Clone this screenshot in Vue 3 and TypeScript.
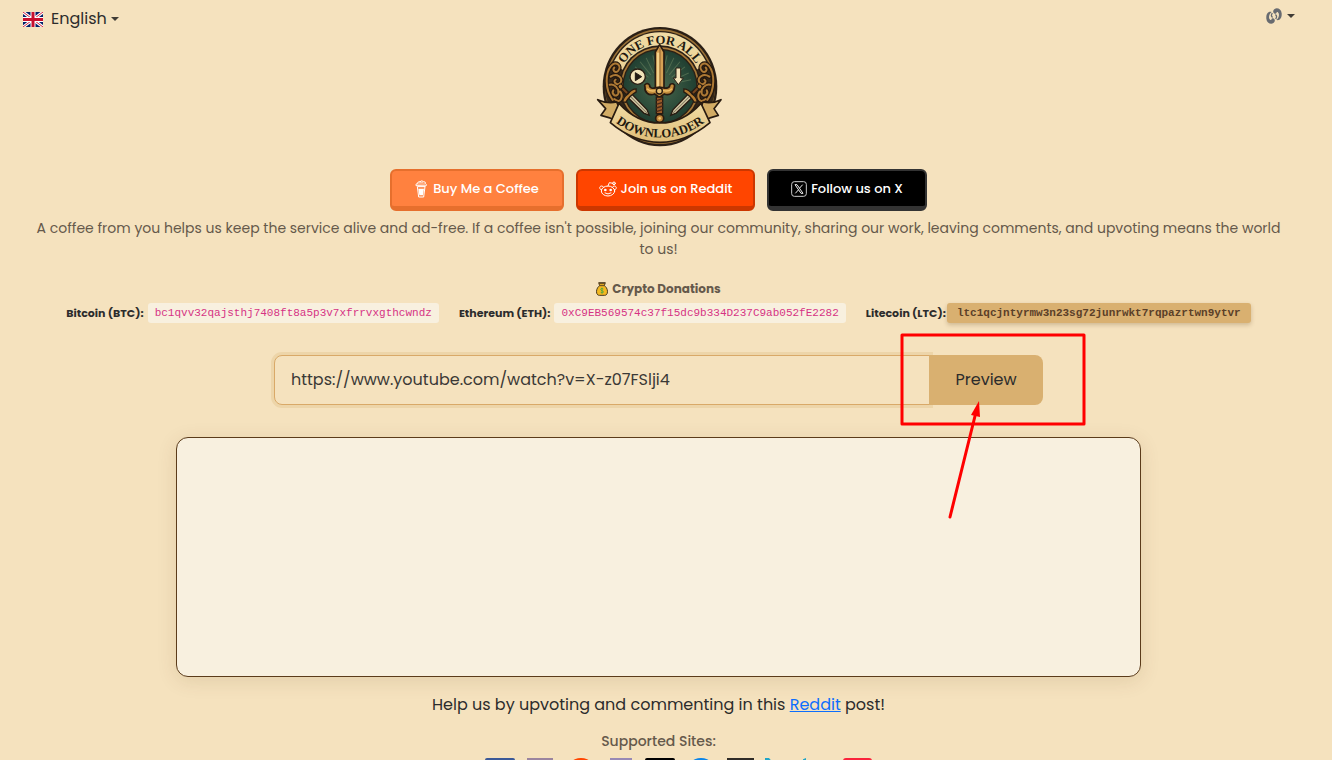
<script setup lang="ts">
import { ref } from 'vue'

interface Wallet {
  id: string
  label: string
  address: string
  active: boolean
}

const wallets: Wallet[] = [
  { id: 'btc', label: 'Bitcoin (BTC):', address: 'bc1qvv32qajsthj7408ft8a5p3v7xfrrvxgthcwndz', active: false },
  { id: 'eth', label: 'Ethereum (ETH):', address: '0xC9EB569574c37f15dc9b334D237C9ab052fE2282', active: false },
  { id: 'ltc', label: 'Litecoin (LTC):', address: 'ltc1qcjntyrmw3n23sg72junrwkt7rqpazrtwn9ytvr', active: true },
]

const url = ref('https://www.youtube.com/watch?v=X-z07FSlji4')
const rays: number[] = [-78, -65, -52, -39, -26, -13, 13, 26, 39, 52, 65, 78]
</script>

<template>
  <div class="page">
    <header class="header">
      <button class="menu" type="button">
        <svg class="flag" viewBox="0 0 40 30" aria-hidden="true">
          <rect width="40" height="30" fill="#012169" />
          <path d="M0 0 40 30M40 0 0 30" stroke="#fff" stroke-width="6" />
          <path d="M0 0 40 30M40 0 0 30" stroke="#d4213d" stroke-width="2" />
          <path d="M20 0V30M0 15H40" stroke="#fff" stroke-width="10" />
          <path d="M20 0V30M0 15H40" stroke="#c8102e" stroke-width="6" />
        </svg>
        <span>English</span>
        <span class="caret"></span>
      </button>

      <svg class="logo" viewBox="-4 0 420 405" role="img" aria-label="One For All Downloader">
        <defs>
          <path id="arc-top" d="M82 199A127 127 0 0 1 336 199" />
          <path id="arc-bottom" d="M44 278A220 220 0 0 0 374 278" />
          <linearGradient id="parchment" x1="0" y1="0" x2="0" y2="1">
            <stop offset="0" stop-color="#f1dca5" />
            <stop offset="1" stop-color="#dfbd78" />
          </linearGradient>
          <radialGradient id="green">
            <stop offset="0" stop-color="#47664c" />
            <stop offset="1" stop-color="#203f31" />
          </radialGradient>
          <g id="small-sword">
            <path d="M-8 -30H8L7 40 0 56-7 40Z" fill="#d8cba6" stroke="#281c12" stroke-width="4" />
            <path d="M0 -28V48" stroke="#827c61" stroke-width="3" />
            <path d="M-28 -28Q-16 -38 0 -34 16 -38 28 -28L22 -21Q0 -27 -22 -21Z" fill="#b77d32" stroke="#281c12" stroke-width="4" />
            <path d="M-5 -36V-62H5V-36Z" fill="#79471e" stroke="#281c12" stroke-width="4" />
            <circle cy="-66" r="7" fill="#b77d32" stroke="#281c12" stroke-width="3" />
          </g>
          <g id="scroll" fill="none" stroke-linecap="round">
            <path d="M67 240C42 206 46 158 62 138 77 119 95 139 84 152 75 162 64 149 72 143M61 170C80 157 98 174 91 187 82 201 65 184 76 179M58 194C72 190 88 207 84 220 78 235 62 222 69 211M72 237C94 255 98 226 90 215" stroke="#25180e" stroke-width="13" />
            <path d="M67 240C42 206 46 158 62 138 77 119 95 139 84 152 75 162 64 149 72 143M61 170C80 157 98 174 91 187 82 201 65 184 76 179M58 194C72 190 88 207 84 220 78 235 62 222 69 211M72 237C94 255 98 226 90 215" stroke="#ad7935" stroke-width="6" />
          </g>
        </defs>
        <ellipse cx="209" cy="200" rx="172" ry="179" fill="#2a1f15" />
        <ellipse cx="209" cy="200" rx="165" ry="172" fill="#9a7136" />
        <ellipse cx="209" cy="200" rx="160" ry="167" fill="#2a1f15" />
        <ellipse cx="209" cy="200" rx="156" ry="163" fill="url(#parchment)" />
        <path d="M67 124Q38 162 44 212 48 254 76 286L342 286Q370 254 374 212 380 162 351 124L320 149 96 149Z" fill="#35281a" />
        <circle cx="209" cy="199" r="123" fill="#2a1f15" />
        <circle cx="209" cy="199" r="118" fill="#a77938" />
        <circle cx="209" cy="199" r="113" fill="#2a1f15" />
        <circle cx="209" cy="199" r="109" fill="url(#green)" />
        <g stroke="#6c8661" stroke-width="3" opacity="0.55">
          <path v-for="angle in rays" :key="angle" d="M209 155V104" :transform="`rotate(${angle} 209 199)`" />
        </g>
        <use href="#scroll" />
        <use href="#scroll" transform="translate(418 0) scale(-1 1)" />
        <use href="#small-sword" transform="translate(137 246) rotate(-45)" />
        <use href="#small-sword" transform="translate(281 246) rotate(45)" />
        <circle cx="142" cy="170" r="23" fill="#f1e3b9" stroke="#2a1f15" stroke-width="4" />
        <path d="M135 158 154 170 135 182Z" fill="#211a13" stroke="#211a13" stroke-width="3" stroke-linejoin="round" />
        <path d="M257 144H271V174H279L264 194 249 174H257Z" fill="#f1e3b9" stroke="#2a1f15" stroke-width="3" />
        <path d="M195 212V96L208 74 221 96V212Z" fill="#d6a154" stroke="#281b10" stroke-width="5" />
        <path d="M209 84V208" stroke="#8d602c" stroke-width="3" />
        <path d="M203 98V207" stroke="#f2d18b" stroke-width="7" />
        <path d="M164 201C158 190 178 187 178 198 180 210 195 203 207 201 220 203 235 210 238 198 238 187 257 190 252 202 252 216 240 228 222 222L207 232 193 222C174 229 162 216 164 201Z" fill="#c28b3b" stroke="#281b10" stroke-width="5" />
        <path d="M170 206Q182 217 198 211M245 206Q232 217 218 211" fill="none" stroke="#efc16b" stroke-width="4" />
        <circle cx="207" cy="213" r="9" fill="#e4bf74" stroke="#281b10" stroke-width="4" />
        <path d="M198 231H217V281H198Z" fill="#9b5b29" stroke="#281b10" stroke-width="4" />
        <path d="M198 242 217 236M198 253 217 247M198 264 217 258M198 275 217 269" stroke="#482b1a" stroke-width="4" />
        <path d="M22 239Q50 252 79 246L94 281 82 305Q57 291 32 286L46 266ZM392 239Q366 252 338 246L324 281 336 305Q360 291 384 286L371 266Z" fill="#d2ac65" stroke="#281b10" stroke-width="5" stroke-linejoin="round" />
        <path d="M86 250Q140 309 209 309 278 309 332 250L359 308Q288 367 209 367 130 367 60 308Z" fill="url(#parchment)" stroke="#281b10" stroke-width="5" stroke-linejoin="round" />
        <circle cx="208" cy="295" r="12" fill="#bd8438" stroke="#281b10" stroke-width="5" />
        <circle cx="208" cy="295" r="4" fill="#efc16b" />
        <text class="logo-text"><textPath href="#arc-top" startOffset="50%">ONE FOR ALL</textPath></text>
        <text class="logo-text"><textPath href="#arc-bottom" startOffset="50%">DOWNLOADER</textPath></text>
      </svg>

      <button class="menu menu-theme" type="button" aria-label="Theme">
        <svg class="theme-icon" viewBox="0 0 48 48" aria-hidden="true">
          <path d="M17 12C5 9 0 20 1 32 2 45 15 50 22 45 29 40 27 32 21 31 15 30 18 38 13 36 6 30 9 18 17 12Z" fill="#686b70" />
          <path d="M31 36C43 39 48 28 47 16 46 3 33-2 26 3 19 8 21 16 27 17 33 18 30 10 35 12 42 18 39 30 31 36Z" fill="#686b70" />
          <path d="M19 15Q13 24 20 28M29 33Q35 24 28 20" fill="none" stroke="#686b70" stroke-width="4" />
        </svg>
        <span class="caret"></span>
      </button>
    </header>

    <main>
      <nav class="actions" aria-label="Support links">
        <a class="action coffee" href="#coffee">
          <svg viewBox="0 0 36 54" class="cup" aria-hidden="true">
            <path d="M7 20 11 51H26L30 20Z" fill="none" stroke="#fff" stroke-width="3" />
            <path d="M10 26H27L24 46H13Z" fill="#fff" />
            <path d="M3 17Q1 11 7 11 8 4 15 5 20 0 26 5 33 5 31 11 36 12 33 18Z" fill="none" stroke="#fff" stroke-width="3" />
            <path d="M6 12H30M9 18H31M13 7H25" stroke="#fff" stroke-width="2" />
          </svg>
          <span>Buy Me a Coffee</span>
        </a>
        <a class="action reddit" href="#reddit">
          <svg viewBox="0 0 54 48" class="alien" aria-hidden="true">
            <g fill="none" stroke="#fff" stroke-width="3" stroke-linecap="round">
              <ellipse cx="27" cy="30" rx="20" ry="15" />
              <path d="M8 26C0 27 0 15 8 15Q12 15 14 19M46 26C54 27 54 15 46 15Q42 15 40 19M27 15 31 5 42 7M18 36Q27 42 36 36" />
              <circle cx="45" cy="7" r="4" />
            </g>
            <circle cx="19" cy="27" r="4" fill="#fff" /><circle cx="35" cy="27" r="4" fill="#fff" />
          </svg>
          <span>Join us on Reddit</span>
        </a>
        <a class="action x" href="#x">
          <svg viewBox="0 0 48 48" class="x-icon" aria-hidden="true">
            <rect x="2" y="2" width="44" height="44" rx="8" fill="none" stroke="#ccc" stroke-width="3" />
            <path d="M12 11H18L36 37H30ZM35 11 26 21M22 27 13 37" fill="none" stroke="#eee" stroke-width="3" />
          </svg>
          <span>Follow us on X</span>
        </a>
      </nav>

      <p class="intro">A coffee from you helps us keep the service alive and ad-free. If a coffee isn't possible, joining our community, sharing our work, leaving comments, and upvoting means the world to us!</p>

      <section>
        <h2 class="crypto-title">
          <svg class="bag" viewBox="0 0 36 42" aria-hidden="true">
            <path d="M8 2H28L25 11C37 18 38 40 26 40H10C-2 40-1 18 11 11Z" fill="#f3b820" stroke="#493a22" stroke-width="3" />
            <path d="M9 5H27M11 11H25" stroke="#5e4522" stroke-width="3" />
            <path d="M22 21Q14 17 14 22 14 25 18 26 23 27 22 31 19 34 14 31M18 17V35" fill="none" stroke="#28a34a" stroke-width="2" />
          </svg>
          <span>Crypto Donations</span>
        </h2>
        <ul class="wallets">
          <li v-for="wallet in wallets" :key="wallet.id" class="wallet" :class="{ active: wallet.active }">
            <strong>{{ wallet.label }}</strong>
            <code>{{ wallet.address }}</code>
          </li>
        </ul>
      </section>

      <form class="search" @submit.prevent>
        <input v-model="url" type="text" aria-label="Video address" spellcheck="false" />
        <button type="submit">Preview</button>
        <svg class="callout" viewBox="0 0 186 187" aria-hidden="true">
          <path d="M2 2H184V91H2ZM50 184 76 79" fill="none" stroke="#f00" stroke-width="3" stroke-linecap="round" stroke-linejoin="round" />
          <path d="M79 68 80 84 71 82Z" fill="#f00" />
        </svg>
      </form>

      <section class="preview" aria-label="Preview area"></section>

      <p class="help">Help us by upvoting and commenting in this <a href="#post">Reddit</a> post!</p>

      <h3 class="sites-title">Supported Sites:</h3>
      <div class="sites" aria-hidden="true">
        <svg viewBox="0 0 32 32"><path d="M4 9H28V25H4Z" fill="#e62117" /></svg>
        <svg viewBox="0 0 32 32"><rect x="2" width="30" height="32" rx="2" fill="#3b5998" /></svg>
        <svg viewBox="0 0 32 32"><path d="M5 1H29V31H5Z" fill="none" stroke="#9b859f" stroke-width="2" /></svg>
        <svg viewBox="0 0 32 32"><circle cx="18" cy="16" r="16" fill="#ff4500" /></svg>
        <svg viewBox="0 0 32 32"><path d="M8 1H28V31H8Z" fill="none" stroke="#9889b5" stroke-width="2" /></svg>
        <svg viewBox="0 0 32 32"><rect x="2" width="30" height="32" rx="2" /></svg>
        <svg viewBox="0 0 32 32"><circle cx="18" cy="16" r="16" fill="#0a84e8" /></svg>
        <svg viewBox="0 0 32 32"><path d="M5 1H30V31H5Z" fill="none" stroke="#302c28" stroke-width="2" /></svg>
        <svg viewBox="0 0 32 32"><path d="M2 0H6L13 8H28V30H2Z" fill="#20a5c8" /></svg>
        <svg viewBox="0 0 32 32"><path d="M1 2H-2L3 0V8H28V30H1Z" fill="#20a5c8" /></svg>
        <svg viewBox="0 0 32 32"><rect width="29" height="32" rx="3" fill="#fa233b" /></svg>
      </div>
    </main>
  </div>
</template>

<style>
html {
  background: #f5e2be;
  scrollbar-width: none;
}

body {
  margin: 0;
}
</style>

<style scoped>
.page {
  box-sizing: border-box;
  min-height: 100vh;
  padding: 0 15px 16px 0;
  background: #f5e2be;
  color: #2c2c2c;
  font-family: Poppins, Inter, "Open Sans", sans-serif;
  font-size: 16px;
  line-height: 24px;
}

.header {
  display: grid;
  grid-template-columns: 1fr auto 1fr;
  align-items: start;
  padding: 7px 22px 0 23px;
}

.menu {
  display: flex;
  align-items: center;
  justify-self: start;
  padding: 0;
  border: 0;
  background: none;
  color: inherit;
  font: inherit;
}

.menu-theme {
  justify-self: end;
  height: 18px;
}

.flag {
  width: 20px;
  height: 15px;
  margin-right: 8px;
}

.caret {
  margin-left: 4px;
  border-top: 4px solid #403c36;
  border-right: 4px solid transparent;
  border-left: 4px solid transparent;
}

.theme-icon {
  width: 16px;
  height: 16px;
  margin-right: 1px;
}

.logo {
  width: 140px;
  height: 135px;
  margin-top: 13px;
}

.logo-text {
  fill: #21180f;
  font-family: "Liberation Serif", serif;
  font-size: 38px;
  font-weight: 700;
  text-anchor: middle;
}

.actions {
  display: flex;
  justify-content: center;
  gap: 12px;
  margin-top: 14px;
}

.action {
  display: flex;
  box-sizing: border-box;
  align-items: center;
  justify-content: center;
  gap: 4px;
  height: 42px;
  border: 2px solid;
  border-bottom-width: 5px;
  border-radius: 6px;
  color: #fff;
  font-size: 13px;
  font-weight: 500;
  text-decoration: none;
}

.coffee {
  width: 174px;
  border-color: #e66f2d;
  background: #ff813f;
}

.reddit {
  width: 179px;
  border-color: #cc3700;
  background: #ff4500;
}

.x {
  width: 160px;
  border-color: #333;
  background: #000;
}

.cup {
  width: 12px;
  height: 18px;
  margin-right: 2px;
}

.alien {
  width: 18px;
  height: 16px;
}

.x-icon {
  width: 16px;
  height: 16px;
}

.intro {
  margin: 7px 28px 0;
  color: #65594b;
  font-size: 14px;
  line-height: 21px;
  text-align: center;
}

.crypto-title {
  display: flex;
  align-items: center;
  justify-content: center;
  gap: 4px;
  margin: 19px 0 4px;
  color: #65594b;
  font-size: 12px;
  font-weight: 700;
  line-height: 20px;
}

.bag {
  width: 12px;
  height: 14px;
}

.wallets {
  display: flex;
  justify-content: center;
  gap: 20px;
  margin: 0;
  padding: 0;
  list-style: none;
}

.wallet {
  display: flex;
  align-items: center;
  gap: 4px;
  font-size: 11px;
  line-height: 20px;
}

.wallet code {
  padding: 0 7px;
  border-radius: 3px;
  background: #f8f0df;
  color: #d63384;
  font-family: "Courier New", "Liberation Mono", monospace;
  font-size: 11px;
}

.wallet.active {
  gap: 1px;
}

.wallet.active code {
  padding: 0 10px;
  background: #d9b070;
  box-shadow: 0 2px 4px rgba(90, 60, 20, 0.25);
  color: #5b4028;
  font-weight: 700;
}

.search {
  position: relative;
  display: flex;
  box-sizing: border-box;
  width: 58.4%;
  height: 50px;
  margin: 32px auto 0;
}

.search input {
  box-sizing: border-box;
  flex: 1;
  min-width: 0;
  padding: 0 16px;
  border: 1px solid #d9a968;
  border-radius: 8px 0 0 8px;
  outline: 0;
  background: #f5e2be;
  box-shadow: 0 0 0 3px #edd5a9;
  color: #3b3936;
  font: inherit;
}

.search button {
  z-index: 1;
  width: 114px;
  margin-left: -1px;
  border: 0;
  border-radius: 0 8px 8px 0;
  background: #d9b070;
  color: #2c2c2c;
  font: inherit;
}

.callout {
  position: absolute;
  z-index: 2;
  top: -22px;
  right: -43px;
  width: 186px;
  height: 187px;
  pointer-events: none;
}

.preview {
  box-sizing: border-box;
  width: 73.3%;
  min-height: 240px;
  margin: 32px auto 0;
  border: 1px solid #5b3b1a;
  border-radius: 12px;
  background: #f8f0df;
  box-shadow: 0 4px 20px rgba(90, 60, 20, 0.12);
}

.help {
  margin: 16px 0 0;
  text-align: center;
}

.help a {
  color: #0d6efd;
}

.sites-title {
  margin: 13px 0 6px;
  color: #65594b;
  font-size: 14px;
  font-weight: 500;
  line-height: 22px;
  text-align: center;
}

.sites {
  display: flex;
  justify-content: center;
  gap: 8px;
}

.sites svg {
  width: 32px;
  height: 32px;
}
</style>
